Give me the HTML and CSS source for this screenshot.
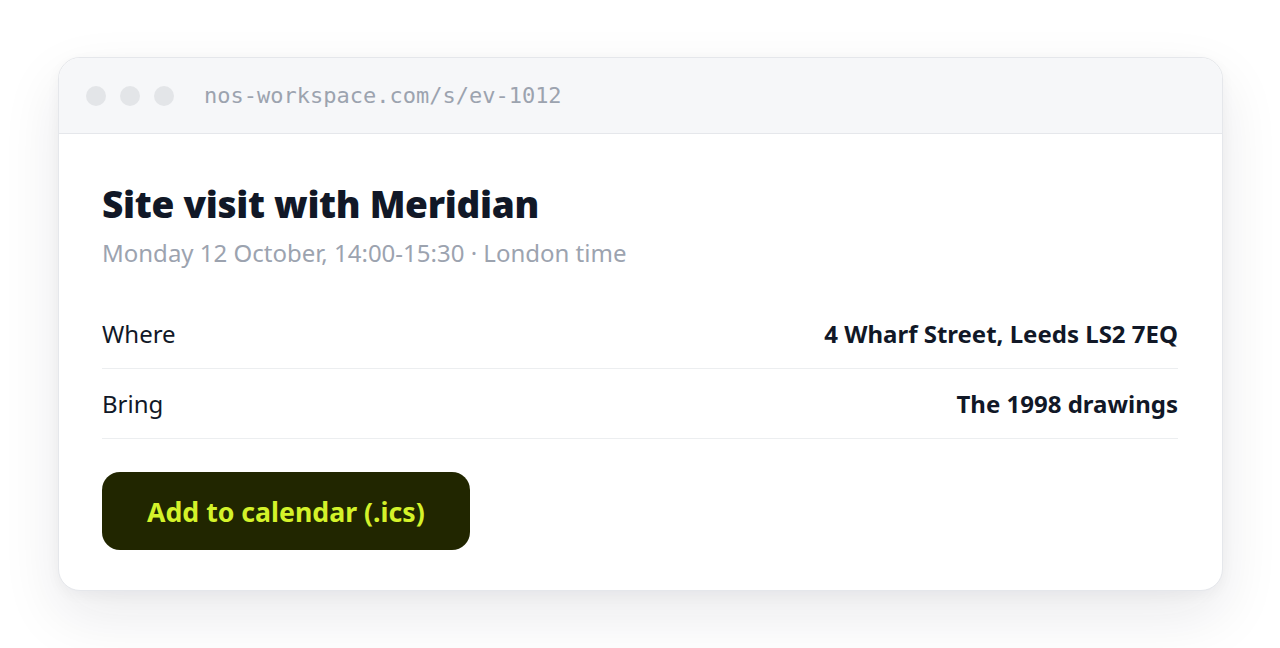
FILE: index.html
```html
<!DOCTYPE html>
<html lang="en">
<head>
<meta charset="utf-8">
<title>Site visit with Meridian</title>
<link rel="stylesheet" href="styles.css">
</head>
<body>
<div class="window">
  <div class="bar">
    <div class="dots"><span class="dot"></span><span class="dot"></span><span class="dot"></span></div>
    <div class="url">nos-workspace.com/s/ev-1012</div>
  </div>
  <div class="content">
    <h1 class="title">Site visit with Meridian</h1>
    <p class="when">Monday 12 October, 14:00-15:30 · London time</p>
    <div class="rows">
      <div class="row"><span class="label">Where</span><span class="value">4 Wharf Street, Leeds LS2 7EQ</span></div>
      <div class="row"><span class="label">Bring</span><span class="value">The 1998 drawings</span></div>
    </div>
    <button class="cta">Add to calendar (.ics)</button>
  </div>
</div>
</body>
</html>
```

FILE: styles.css
```css
html, body {
  margin: 0;
  background: #ffffff;
}
body {
  padding: 57px 58px;
  font-family: "Segoe UI", "Noto Sans", "Open Sans", sans-serif;
  color: #111827;
}
.window {
  width: 1165px;
  box-sizing: border-box;
  border: 1px solid #e5e7eb;
  border-radius: 22px;
  overflow: hidden;
  background: #ffffff;
  box-shadow: 0 24px 60px rgba(17, 24, 39, 0.09), 0 4px 14px rgba(17, 24, 39, 0.04);
}
.bar {
  height: 75px;
  background: #f6f7f9;
  border-bottom: 1px solid #e5e7eb;
  display: flex;
  align-items: center;
  padding: 0 27px;
  gap: 30px;
}
.dots {
  display: flex;
  gap: 14px;
}
.dot {
  width: 20px;
  height: 20px;
  border-radius: 50%;
  background: #e3e5e8;
}
.url {
  font-family: "DejaVu Sans Mono", "Liberation Mono", monospace;
  font-size: 22px;
  color: #9ca3af;
}
.content {
  padding: 48px 44px 40px 43px;
}
.title {
  margin: 0;
  font-size: 37px;
  line-height: 44px;
  font-weight: 900;
  letter-spacing: -0.3px;
  color: #111827;
}
.when {
  margin: 11px 0 0;
  font-size: 24px;
  line-height: 32px;
  color: #9ca3af;
}
.rows {
  margin-top: 30px;
}
.row {
  display: flex;
  justify-content: space-between;
  align-items: center;
  height: 69px;
  border-bottom: 1px solid #eceef0;
  font-size: 24px;
}
.label {
  color: #111827;
}
.value {
  font-weight: 700;
  color: #111827;
}
.cta {
  display: block;
  margin-top: 33px;
  height: 78px;
  padding: 0 45px;
  border: none;
  border-radius: 18px;
  background: #212600;
  color: #d4f22a;
  font-family: inherit;
  font-size: 26.7px;
  font-weight: 700;
}
```
